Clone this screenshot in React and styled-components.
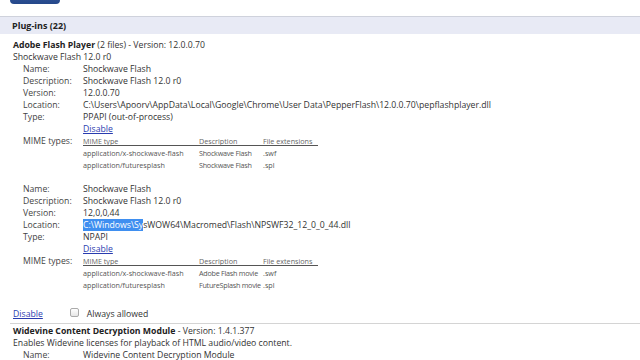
import React from 'react';
import styled, { createGlobalStyle } from "styled-components";

const Global = createGlobalStyle`
  body {
    margin: 0;
    background: #fff;
    font-family: "Open Sans", "Liberation Sans", sans-serif;
    color: #333;
  }
`;

const Page = styled.div`
  width: 640px;
  height: 360px;
  overflow: hidden;
`;

const TopBar = styled.div`
  height: 16px;
  overflow: hidden;
  padding-left: 10px;
`;

const TopButton = styled.div`
  width: 50px;
  height: 20px;
  margin-top: -16px;
  border-radius: 4px;
  background: linear-gradient(#4266a8, #24478a);
`;

const SectionHeader = styled.div`
  height: 17px;
  border-top: 1px solid #cfd2dc;
  background: #e8eaf5;
  padding-left: 12px;
  display: flex;
  align-items: center;
  font-size: 9px;
  font-weight: 700;
  color: #222;
`;

const Plugin = styled.div`
  padding-top: ${p => p.$top || 5}px;
  border-top: ${p => (p.$divided ? "1px solid #d4d4d4" : "none")};
  margin-left: ${p => (p.$divided ? "10px" : "0")};
  padding-left: ${p => (p.$divided ? "3px" : "13px")};
`;

const Line = styled.div`
  height: ${p => p.$h || 12}px;
  line-height: ${p => p.$h || 12}px;
  font-size: 8.7px;
  white-space: nowrap;
  color: #333;
`;

const Name = styled.b`
  font-weight: 700;
  color: #222;
`;

const Details = styled.div`
  display: grid;
  grid-template-columns: 60px 1fr;
  grid-auto-rows: 12px;
  padding-left: 10px;
  margin-bottom: ${p => p.$gap || 0}px;
  font-size: 8.7px;
  line-height: 12px;
  white-space: nowrap;
`;

const Label = styled.span`
  color: #444;
`;

const Value = styled.span`
  color: #333;
`;

const Link = styled.a`
  color: #2a3cb0;
  text-decoration: underline;
  cursor: pointer;
`;

const Selected = styled.span`
  background: #3f8ff0;
  color: #fff;
`;

const MimeTable = styled.div`
  grid-row: span 3;
  display: grid;
  grid-template-columns: 116px 64px 55px;
  grid-auto-rows: 12px;
  width: 235px;
  font-size: 7.2px;
  color: #555;
`;

const MimeHead = styled.span`
  border-bottom: 1px solid #555;
  height: 10px;
  line-height: 12px;
  color: #666;
`;

const MimeCell = styled.span`
  line-height: 12px;
  letter-spacing: ${p => (p.$tight ? "-0.25px" : "0")};
`;

const Footer = styled.div`
  display: flex;
  align-items: center;
  height: 12px;
  margin-top: 17px;
  padding-left: 13px;
  margin-bottom: 3px;
  font-size: 8.7px;
`;

const Check = styled.span`
  display: inline-block;
  width: 7px;
  height: 7px;
  margin: -4px 8px 0 27px;
  border: 1px solid #aaa;
  border-radius: 2px;
  background: linear-gradient(#fff, #e6e6e6);
`;

const mime = (rows) => (
  <MimeTable>
    <MimeHead>MIME type</MimeHead>
    <MimeHead>Description</MimeHead>
    <MimeHead>File extensions</MimeHead>
    {rows.flat().map((c, i) => <MimeCell key={i} $tight={i % 3 === 1}>{c}</MimeCell>)}
  </MimeTable>
);

const App = () => {
  return (
    <Page>
      <Global />
      <TopBar><TopButton /></TopBar>
      <SectionHeader>Plug-ins (22)</SectionHeader>
      <Plugin>
        <Line><Name>Adobe Flash Player</Name> (2 files) - Version: 12.0.0.70</Line>
        <Line>Shockwave Flash 12.0 r0</Line>
        <Details $gap={12}>
          <Label>Name:</Label><Value>Shockwave Flash</Value>
          <Label>Description:</Label><Value>Shockwave Flash 12.0 r0</Value>
          <Label>Version:</Label><Value>12.0.0.70</Value>
          <Label>Location:</Label><Value>C:\Users\Apoorv\AppData\Local\Google\Chrome\User Data\PepperFlash\12.0.0.70\pepflashplayer.dll</Value>
          <Label>Type:</Label><Value>PPAPI (out-of-process)</Value>
          <span /><Value><Link>Disable</Link></Value>
          <Label>MIME types:</Label>
          {mime([
            ["application/x-shockwave-flash", "Shockwave Flash", ".swf"],
            ["application/futuresplash", "Shockwave Flash", ".spl"],
          ])}
        </Details>
        <Details>
          <Label>Name:</Label><Value>Shockwave Flash</Value>
          <Label>Description:</Label><Value>Shockwave Flash 12.0 r0</Value>
          <Label>Version:</Label><Value>12,0,0,44</Value>
          <Label>Location:</Label><Value><Selected>C:\Windows\Sy</Selected>sWOW64\Macromed\Flash\NPSWF32_12_0_0_44.dll</Value>
          <Label>Type:</Label><Value>NPAPI</Value>
          <span /><Value><Link>Disable</Link></Value>
          <Label>MIME types:</Label>
          {mime([
            ["application/x-shockwave-flash", "Adobe Flash movie", ".swf"],
            ["application/futuresplash", "FutureSplash movie", ".spl"],
          ])}
        </Details>
      </Plugin>
      <Footer>
        <Link>Disable</Link>
        <Check />
        <span>Always allowed</span>
      </Footer>
      <Plugin $divided $top={2}>
        <Line $h={11}><Name>Widevine Content Decryption Module</Name> - Version: 1.4.1.377</Line>
        <Line>Enables Widevine licenses for playback of HTML audio/video content.</Line>
        <Details>
          <Label>Name:</Label><Value>Widevine Content Decryption Module</Value>
        </Details>
      </Plugin>
    </Page>
  );
};

export default App;
